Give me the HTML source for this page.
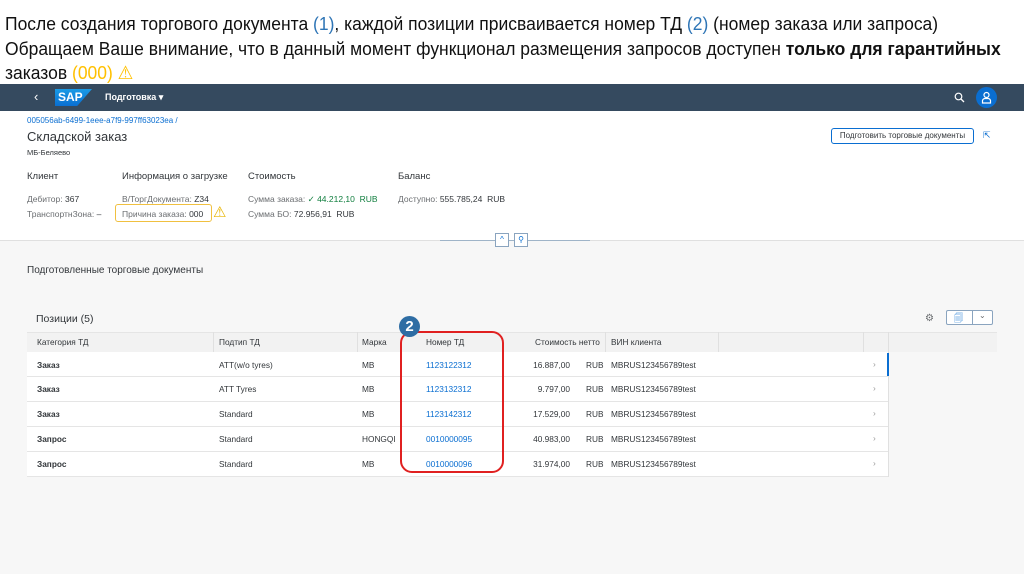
<!DOCTYPE html>
<html><head><meta charset="utf-8"><style>
*{margin:0;padding:0;box-sizing:border-box}
body{width:1024px;height:574px;background:#fff;font-family:"Liberation Sans",sans-serif;position:relative;overflow:hidden;color:#32363a}
.a{position:absolute;white-space:nowrap}
.ln{position:absolute;left:5px;font-size:18.5px;color:#111;transform:scaleX(0.945);transform-origin:left top;white-space:nowrap}
.bl{color:#2e75b6}.yl{color:#ffc000}
.s9{font-size:8.5px;color:#6a6d70}
.v{color:#32363a}
.cell{position:absolute;font-size:8.3px;white-space:nowrap}
.row{position:absolute;left:27px;width:861px;height:25px;background:#fff;border-bottom:1px solid #e5e5e5}
.lk{color:#0a6ed1}
</style></head><body>
<div class="ln" style="top:13px">После создания торгового документа <span class="bl">(1)</span>, каждой позиции присваивается номер ТД <span class="bl">(2)</span> (номер заказа или запроса)</div>
<div class="ln" style="top:38px">Обращаем Ваше внимание, что в данный момент функционал размещения запросов доступен <b>только для гарантийных</b></div>
<div class="ln" style="top:62px">заказов <span class="yl">(000) ⚠</span></div>

<div class="a" style="left:0;top:84px;width:1024px;height:27px;background:#354a5f"></div>
<div class="a" style="left:34px;top:89px;color:#fff;font-size:13px">‹</div>
<div class="a" style="left:55px;top:89px;width:37px;height:17px;background:linear-gradient(#1b9be6,#0a6ed1);clip-path:polygon(0 0,100% 0,60% 100%,0 100%);color:#fff;font-weight:bold;font-size:12px;padding-left:3px;line-height:17px">SAP</div>
<div class="a" style="left:105px;top:92px;color:#fff;font-size:9px;font-weight:bold">Подготовка ▾</div>
<svg class="a" style="left:954px;top:92px" width="11" height="11" viewBox="0 0 11 11"><circle cx="4.5" cy="4.5" r="3.3" fill="none" stroke="#fff" stroke-width="1.2"/><path d="M7 7l3 3" stroke="#fff" stroke-width="1.3"/></svg>
<div class="a" style="left:976px;top:87px;width:21px;height:21px;border-radius:50%;background:#0a6ed1"></div>
<svg class="a" style="left:980px;top:91px" width="13" height="13" viewBox="0 0 13 13"><circle cx="6.5" cy="4" r="2.5" fill="none" stroke="#fff" stroke-width="1.2"/><path d="M2.5 12V10a2.5 2.5 0 0 1 2.5-2.5h3a2.5 2.5 0 0 1 2.5 2.5V12z" fill="none" stroke="#fff" stroke-width="1.2"/></svg>

<div class="a lk" style="left:27px;top:116px;font-size:8px">005056ab-6499-1eee-a7f9-997ff63023ea /</div>
<div class="a" style="left:27px;top:129px;font-size:13px">Складской заказ</div>
<div class="a" style="left:27px;top:148px;font-size:7.5px">МБ-Беляево</div>
<div class="a" style="left:831px;top:128px;width:143px;height:16px;border:1px solid #0a6ed1;border-radius:3px;font-size:8px;color:#32363a;text-align:center;line-height:14px">Подготовить торговые документы</div>
<div class="a" style="left:983px;top:130px;font-size:9px;color:#0a6ed1">⇱</div>

<div class="a" style="left:27px;top:171px;font-size:9.5px">Клиент</div>
<div class="a" style="left:122px;top:171px;font-size:9.5px">Информация о загрузке</div>
<div class="a" style="left:248px;top:171px;font-size:9.5px">Стоимость</div>
<div class="a" style="left:398px;top:171px;font-size:9.5px">Баланс</div>
<div class="a s9" style="left:27px;top:194px">Дебитор: <span class="v">367</span></div>
<div class="a s9" style="left:27px;top:209px">ТранспортнЗона: <span class="v">–</span></div>
<div class="a s9" style="left:122px;top:194px">В/ТоргДокумента: <span class="v">Z34</span></div>
<div class="a" style="left:115px;top:204px;width:97px;height:18px;border:1.5px solid #f0c040;border-radius:3px"></div>
<div class="a s9" style="left:122px;top:209px">Причина заказа: <span class="v">000</span></div>
<div class="a" style="left:213px;top:203px;font-size:15px;color:#e8b400">⚠</div>
<div class="a s9" style="left:248px;top:194px">Сумма заказа: <span style="color:#107e3e">✓ 44.212,10 &nbsp;RUB</span></div>
<div class="a s9" style="left:248px;top:209px">Сумма БО: <span class="v">72.956,91 &nbsp;RUB</span></div>
<div class="a s9" style="left:398px;top:194px">Доступно: <span class="v">555.785,24 &nbsp;RUB</span></div>

<div class="a" style="left:0;top:240px;width:1024px;height:334px;background:#f7f7f7;border-top:1px solid #e0e0e0"></div>
<div class="a" style="left:440px;top:240px;width:150px;height:1px;background:#9fb4c8"></div>
<div class="a" style="left:495px;top:233px;width:14px;height:14px;border:1px solid #8aa4bf;background:#fff;font-size:8px;text-align:center;line-height:12px;color:#0a6ed1">^</div>
<div class="a" style="left:514px;top:233px;width:14px;height:14px;border:1px solid #8aa4bf;background:#fff;font-size:8px;text-align:center;line-height:12px;color:#0a6ed1">⚲</div>

<div class="a" style="left:27px;top:265px;font-size:10px">Подготовленные торговые документы</div>
<div class="a" style="left:36px;top:313px;font-size:10.5px">Позиции (5)</div>
<div class="a" style="left:925px;top:313px;font-size:10px;color:#6a6d70">⚙</div>
<div class="a" style="left:946px;top:310px;width:47px;height:15px;border:1px solid #8aa4bf;border-radius:2px;background:#fff"></div>
<div class="a" style="left:972px;top:310px;width:1px;height:15px;background:#8aa4bf"></div>
<div class="a" style="left:954px;top:311px;font-size:9px;color:#0a6ed1">🗐</div>
<div class="a" style="left:979px;top:311px;font-size:8px;color:#6a6d70">⌄</div>

<div class="a" style="left:27px;top:332px;width:970px;height:20px;background:#f2f2f2;border-top:1px solid #e5e5e5"></div>
<div class="cell" style="left:37px;top:337px">Категория ТД</div>
<div class="cell" style="left:219px;top:337px">Подтип ТД</div>
<div class="cell" style="left:362px;top:337px">Марка</div>
<div class="cell" style="left:426px;top:337px">Номер ТД</div>
<div class="cell" style="left:535px;top:337px">Стоимость нетто</div>
<div class="cell" style="left:611px;top:337px">ВИН клиента</div>
<div class="a" style="left:213px;top:332px;width:1px;height:20px;background:#e0e0e0"></div>
<div class="a" style="left:357px;top:332px;width:1px;height:20px;background:#e0e0e0"></div>
<div class="a" style="left:605px;top:332px;width:1px;height:20px;background:#e0e0e0"></div>
<div class="a" style="left:718px;top:332px;width:1px;height:20px;background:#e0e0e0"></div>
<div class="a" style="left:863px;top:332px;width:1px;height:20px;background:#e0e0e0"></div>
<div class="a" style="left:888px;top:332px;width:1px;height:145px;background:#e0e0e0"></div>

<div class="row" style="top:352px"></div><div class="row" style="top:377px"></div><div class="row" style="top:402px"></div><div class="row" style="top:427px"></div><div class="row" style="top:452px"></div>
<div class="a" style="left:887px;top:353px;width:2px;height:23px;background:#0a6ed1"></div>

<div class="cell" style="left:37px;top:360px;font-weight:bold">Заказ</div><div class="cell" style="left:219px;top:360px">ATT(w/o tyres)</div><div class="cell" style="left:362px;top:360px">MB</div><div class="cell lk" style="left:426px;top:360px">1123122312</div><div class="cell" style="left:500px;width:70px;text-align:right;top:360px">16.887,00</div><div class="cell" style="left:586px;top:360px">RUB</div><div class="cell" style="left:611px;top:360px">MBRUS123456789test</div><div class="cell" style="left:873px;top:359px;color:#999">›</div>
<div class="cell" style="left:37px;top:384px;font-weight:bold">Заказ</div><div class="cell" style="left:219px;top:384px">ATT Tyres</div><div class="cell" style="left:362px;top:384px">MB</div><div class="cell lk" style="left:426px;top:384px">1123132312</div><div class="cell" style="left:500px;width:70px;text-align:right;top:384px">9.797,00</div><div class="cell" style="left:586px;top:384px">RUB</div><div class="cell" style="left:611px;top:384px">MBRUS123456789test</div><div class="cell" style="left:873px;top:383px;color:#999">›</div>
<div class="cell" style="left:37px;top:409px;font-weight:bold">Заказ</div><div class="cell" style="left:219px;top:409px">Standard</div><div class="cell" style="left:362px;top:409px">MB</div><div class="cell lk" style="left:426px;top:409px">1123142312</div><div class="cell" style="left:500px;width:70px;text-align:right;top:409px">17.529,00</div><div class="cell" style="left:586px;top:409px">RUB</div><div class="cell" style="left:611px;top:409px">MBRUS123456789test</div><div class="cell" style="left:873px;top:408px;color:#999">›</div>
<div class="cell" style="left:37px;top:434px;font-weight:bold">Запрос</div><div class="cell" style="left:219px;top:434px">Standard</div><div class="cell" style="left:362px;top:434px">HONGQI</div><div class="cell lk" style="left:426px;top:434px">0010000095</div><div class="cell" style="left:500px;width:70px;text-align:right;top:434px">40.983,00</div><div class="cell" style="left:586px;top:434px">RUB</div><div class="cell" style="left:611px;top:434px">MBRUS123456789test</div><div class="cell" style="left:873px;top:433px;color:#999">›</div>
<div class="cell" style="left:37px;top:459px;font-weight:bold">Запрос</div><div class="cell" style="left:219px;top:459px">Standard</div><div class="cell" style="left:362px;top:459px">MB</div><div class="cell lk" style="left:426px;top:459px">0010000096</div><div class="cell" style="left:500px;width:70px;text-align:right;top:459px">31.974,00</div><div class="cell" style="left:586px;top:459px">RUB</div><div class="cell" style="left:611px;top:459px">MBRUS123456789test</div><div class="cell" style="left:873px;top:458px;color:#999">›</div>

<div class="a" style="left:400px;top:331px;width:104px;height:142px;border:2px solid #e02020;border-radius:12px"></div>
<div class="a" style="left:399px;top:316px;width:21px;height:21px;border-radius:50%;background:#2e6da4;color:#fff;font-size:15px;font-weight:bold;text-align:center;line-height:21px">2</div>
</body></html>
